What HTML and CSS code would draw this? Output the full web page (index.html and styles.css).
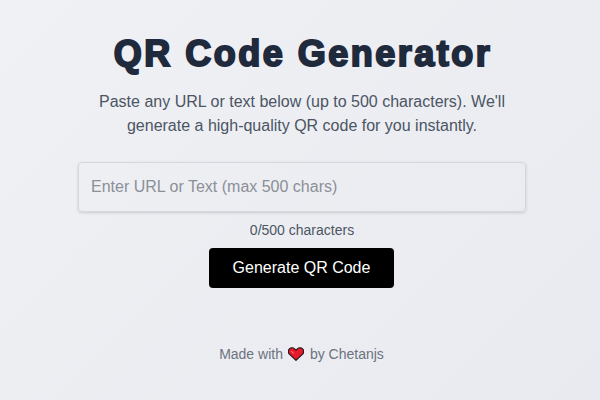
FILE: index.html
```html
<!DOCTYPE html>
<html lang="en">

<head>
  <meta charset="UTF-8">
  <meta name="viewport" content="width=device-width, initial-scale=1.0">
  <title>QR Code Generator</title>
  <link rel="stylesheet" href="styles.css">
</head>

<body>

  <main class="container">
    <h1 class="title">QR Code Generator</h1>
    <p class="intro">Paste any URL or text below (up to 500 characters). We'll generate a high-quality QR code for you instantly.</p>
    <input class="text-input" type="text" placeholder="Enter URL or Text (max 500 chars)" maxlength="500">
    <div class="counter">0/500 characters</div>
    <button class="btn-generate" type="button">Generate QR Code</button>
    <footer class="footer">
      Made with
      <svg class="heart" viewBox="0 0 16 14" width="16" height="14">
        <path d="M8 13.4 1.4 7.2C0 5.8 0 3.2 1.4 1.8 2.8.4 5.2.4 6.6 1.8L8 3.2 9.4 1.8c1.4-1.4 3.8-1.4 5.2 0 1.4 1.4 1.4 4 0 5.4Z" fill="#e8192c" stroke="#1a1a1a" stroke-width="1.1" stroke-linejoin="round"/>
        <path d="M3.4 4.2 5.6 6.4" fill="none" stroke="#f5b8a0" stroke-width="0.9"/>
      </svg>
      by Chetanjs
    </footer>
  </main>

</body>

</html>
```

FILE: styles.css
```css
* {
  box-sizing: border-box;
}

body {
  margin: 0;
  height: 400px;
  overflow: hidden;
  background: linear-gradient(135deg, #f0f1f5, #e9eaef);
  font-family: "Liberation Sans", Arial, sans-serif;
}

.container {
  display: flex;
  flex-direction: column;
  align-items: center;
  width: 448px;
  margin-left: 78px;
  padding-top: 32px;
}

.title {
  margin: 0;
  padding-left: 2px;
  font-size: 36px;
  line-height: 44px;
  font-weight: 900;
  letter-spacing: 2.5px;
  color: #1f2a3d;
  -webkit-text-stroke: 2px #1f2a3d;
  white-space: nowrap;
}

.intro {
  margin: 14px 0 0;
  font-size: 16px;
  line-height: 24px;
  color: #4b5563;
  text-align: center;
}

.text-input {
  width: 100%;
  height: 50px;
  margin-top: 24px;
  padding: 0 12px;
  border: 1px solid #d6d7dc;
  border-radius: 4px;
  background: transparent;
  box-shadow: 0 1px 3px rgba(0, 0, 0, 0.15);
  font-family: inherit;
  font-size: 16px;
  color: #1f2a3d;
}

.text-input::placeholder {
  color: #8b8f97;
}

.counter {
  margin-top: 10px;
  font-size: 14px;
  line-height: 17px;
  color: #4b5563;
}

.btn-generate {
  width: 185px;
  height: 40px;
  margin-top: 9px;
  margin-right: 1px;
  border: 0;
  border-radius: 4px;
  background: #000;
  color: #fff;
  font-family: inherit;
  font-size: 16px;
}

.footer {
  display: flex;
  align-items: center;
  gap: 5.5px;
  margin-top: 56px;
  margin-right: 1px;
  font-size: 14px;
  line-height: 20px;
  color: #6b7280;
}
```
